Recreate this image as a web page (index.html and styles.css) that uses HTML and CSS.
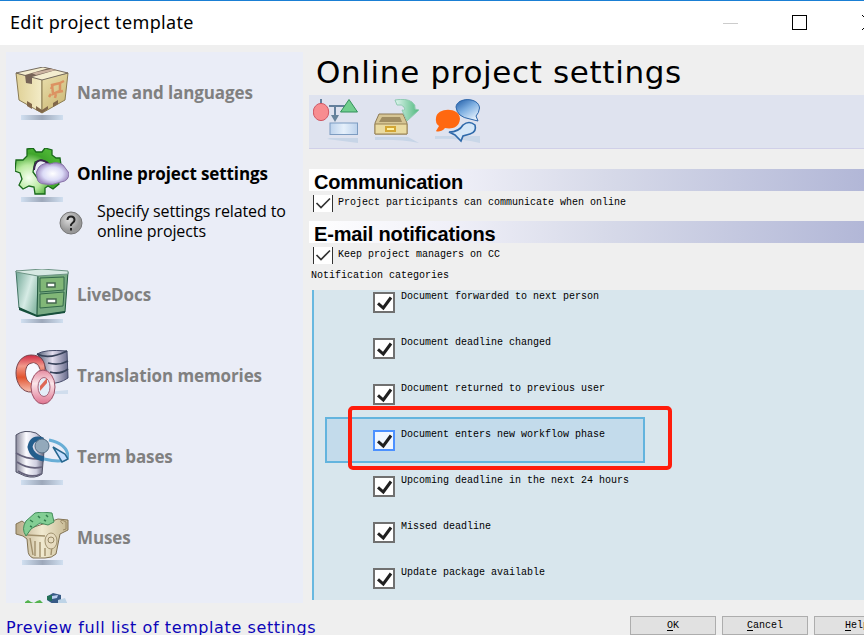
FILE: index.html
```html
<!DOCTYPE html>
<html lang="en">
<head>
<meta charset="utf-8">
<title>Edit project template</title>
<link rel="stylesheet" href="styles.css">
</head>
<body>
<svg width="0" height="0" class="defs">
  <defs>
    <linearGradient id="shadow"><stop offset="0" stop-color="#d0dff0"/><stop offset=".5" stop-color="#9da8ba"/><stop offset="1" stop-color="#d0dff0"/></linearGradient>
    <linearGradient id="boxL"><stop offset="0" stop-color="#e0d196"/><stop offset="1" stop-color="#f3ecc8"/></linearGradient>
    <linearGradient id="boxR" x2=".6" y2="1"><stop offset="0" stop-color="#e9dfae"/><stop offset="1" stop-color="#cdb977"/></linearGradient>
    <radialGradient id="gear" cx=".3" cy=".65" r=".7"><stop offset="0" stop-color="#f6fff0"/><stop offset=".4" stop-color="#b9eaa0"/><stop offset=".75" stop-color="#3fa52b"/><stop offset="1" stop-color="#4cb534"/></radialGradient>
    <radialGradient id="cloud"><stop offset="0" stop-color="#fff"/><stop offset=".6" stop-color="#dcdcf7"/><stop offset="1" stop-color="#a391c6"/></radialGradient>
    <linearGradient id="cab" x2="1" y2=".6"><stop offset="0" stop-color="#6fa694"/><stop offset=".6" stop-color="#d6ebe5"/><stop offset="1" stop-color="#8fbdab"/></linearGradient>
    <linearGradient id="metal"><stop offset="0" stop-color="#8b8b9d"/><stop offset=".35" stop-color="#fbfbff"/><stop offset=".7" stop-color="#cfcfe0"/><stop offset="1" stop-color="#55566e"/></linearGradient>
    <linearGradient id="steel"><stop offset="0" stop-color="#4c5a72"/><stop offset=".5" stop-color="#e5dff0"/><stop offset="1" stop-color="#666a8a"/></linearGradient>
    <linearGradient id="ringA" x2="0" y2="1"><stop offset="0" stop-color="#cf2a44"/><stop offset=".3" stop-color="#f29a8c"/><stop offset=".6" stop-color="#e2542f"/><stop offset="1" stop-color="#f6c2b4"/></linearGradient>
    <linearGradient id="ringB" x2="0" y2="1"><stop offset="0" stop-color="#e58ba0"/><stop offset=".4" stop-color="#fbe6ea"/><stop offset="1" stop-color="#df7490"/></linearGradient>
    <linearGradient id="stone"><stop offset="0" stop-color="#b9a988"/><stop offset=".5" stop-color="#f1ead0"/><stop offset="1" stop-color="#c6b892"/></linearGradient>
    <linearGradient id="blue" x2=".7" y2="1"><stop offset="0" stop-color="#1d5aa5"/><stop offset=".5" stop-color="#7fb0e2"/><stop offset="1" stop-color="#e6f1fc"/></linearGradient>
    <linearGradient id="arrow"><stop offset="0" stop-color="#dff5ef"/><stop offset="1" stop-color="#4fb97d"/></linearGradient>
    <radialGradient id="help" cx=".4" cy=".35"><stop offset="0" stop-color="#dcdcdc"/><stop offset="1" stop-color="#989898"/></radialGradient>
    <linearGradient id="pane"><stop offset="0" stop-color="#bcd2ec"/><stop offset=".5" stop-color="#e6f0fb"/><stop offset="1" stop-color="#bcd2ec"/></linearGradient>
    <symbol id="check" viewBox="0 0 18 17"><path d="M3 9.3 8.300 14 16 3.500" fill="none" stroke="#202020" stroke-width="3"/></symbol>
    <symbol id="thin" viewBox="0 0 18 17"><path d="M2.500 8 7 12.500 16 3.500" fill="none" stroke="#333" stroke-width="1.700"/></symbol>
  </defs>
</svg>

<header class="titlebar">
  <span class="title">Edit project template</span>
  <i class="minimize"></i><i class="maximize"></i>
  <svg class="close" width="15" height="15"><path d="M0 0 15 15M15 0 0 15" stroke="#000"/></svg>
</header>

<div class="body">
  <nav class="sidebar">
    <div class="item">
      <svg class="icon" viewBox="0 0 54 55">
        <rect x="6" y="48" width="42" height="5" fill="url(#shadow)"/>
        <path d="M1 6 27 12V46L4 33Z" fill="url(#boxL)" stroke="#8b7c53"/>
        <path d="M27 12 53 6 50 33 27 46Z" fill="url(#boxR)" stroke="#8b7c53"/>
        <path d="M1 6 28 0 53 6 27 13Z" fill="#f4edcf" stroke="#756b5f"/>
        <path d="M10 8 34 1 41 3 17 10V17L11 16Z" fill="#776457"/><path d="M17 6 36 2 41 3 21 8Z" fill="#cbb3a0"/>
        <path d="M12 34 17 37V42L12 39ZM38 36 43 33V37L38 40ZM21 39 27 43 33 39V42L27 46 21 43Z" fill="#81674a"/>
        <path d="M37 18 45 16V24L38 27ZM45 16 49 14M36 27 34 30M38 18 36 22M43 25 48 24M41 27 40 31" fill="none" stroke="#dc9262" stroke-width="2.5"/>
      </svg>
      <span>Name and languages</span>
    </div>

    <div class="item active">
      <svg class="icon" viewBox="0 0 54 55">
        <rect x="6" y="49" width="42" height="5" fill="url(#shadow)"/>
        <path fill-rule="evenodd" d="M12 1 18 0 21 4H27L30 0 37 2 37 7 41 10 45 10 46 17 43 22 42 31 44 36 38 41 33 38 30 40V46H20L19 39 14 38 8 41 4 37 7 31 5 25 0 23 1 12 8 12 12 8ZM20 14 18 24 23 31 31 30 36 23 32 14 26 12Z" fill="url(#gear)" stroke="#19691b" stroke-width="1.3"/>
        <path d="M19 22C20 11 26 10 34 16" fill="none" stroke="#3c2550" stroke-width="2"/>
        <path d="M24 19Q29 14 35 16 42 13 48 17L54 25Q54 33 46 34 37 38 30 36 22 36 22 29 20 24 24 19Z" fill="url(#cloud)" stroke="#8873a9"/>
      </svg>
      <span>Online project settings</span>
    </div>
    <div class="description">
      <svg width="24" height="24" viewBox="0 0 24 24"><circle cx="12" cy="12" r="11" fill="url(#help)" stroke="#777"/><path d="M8.5 9Q8.5 5.5 12 5.5T15.5 9Q15.5 10.5 13.5 12T12 15M12 17V19.5" fill="none" stroke="#222" stroke-width="2"/></svg>
      <p>Specify settings related to<br>online projects</p>
    </div>

    <div class="item">
      <svg class="icon" viewBox="0 0 54 55">
        <rect x="6" y="50" width="42" height="4" fill="url(#shadow)"/>
        <path d="M1 2 23 5 22 47 4 39Z" fill="url(#cab)" stroke="#447565"/>
        <path d="M23 5 53 3 50 43 22 47Z" fill="#77aa82" stroke="#235940"/>
        <path d="M1 2 27 0 53 2V5L23 7 1 3Z" fill="#d7e9e3" stroke="#6d9485"/>
        <path d="M25 9 49 8 49 21 25 23ZM25 25 49 23 48 37 25 39Z" fill="#81b777" stroke="#33694a"/>
        <path d="M32 14H40V18H32ZM32 30H41V34H32Z" fill="#fff" stroke="#46684f" stroke-width="1.5"/>
        <path d="M4 38 22 46 50 42V44L22 48 4 41Z" fill="#174f3b"/>
      </svg>
      <span>LiveDocs</span>
    </div>

    <div class="item">
      <svg class="icon" viewBox="0 0 54 55">
        <path d="M34 42 53 40V44H35Z" fill="#d0dded"/>
        <path d="M22 4Q30-1 52 1L53 28Q44 34 36 33L27 9Z" fill="url(#steel)" stroke="#454b69"/>
        <path d="M22 4Q34 10 52 1M33 13Q44 16 53 11M35 22Q45 25 53 19" fill="none" stroke="#39435b" stroke-width="1.8"/>
        <path fill-rule="evenodd" d="M16 5C26 5 31 11 30 22L17 42C7 43 1 33 1 23S7 5 16 5ZM18 13C12 13 10 18 11 25S15 35 20 28L25 20C24 15 22 13 18 13Z" fill="url(#ringA)" stroke="#79444b"/>
        <path d="M11 22Q12 14 19 13L25 20 16 29 16 33Q11 31 11 22Z" fill="#f7f9ff"/>
        <ellipse cx="28" cy="37" rx="12" ry="17" fill="url(#ringB)" stroke="#9b5267"/>
        <ellipse cx="29" cy="37" rx="6" ry="9.5" fill="#e4edf8" stroke="#a6647a"/>
        <path d="M25 36 32 28V33L25 41Z" fill="#de6855"/>
      </svg>
      <span>Translation memories</span>
    </div>

    <div class="item">
      <svg class="icon" viewBox="0 0 54 55">
        <rect x="6" y="49" width="42" height="5" fill="url(#shadow)"/>
        <path d="M1 4Q9-2 21 2L30 9 27 43Q20 48 10 45L1 41Z" fill="url(#metal)" stroke="#515367"/>
        <path d="M1 22Q12 29 28 28M2 31Q14 39 27 36M3 40Q15 48 26 43" fill="none" stroke="#65627b" stroke-width="1.7"/>
        <path d="M34 9Q52 13 53 25 51 33 29 28" fill="none" stroke="#68aed6" stroke-width="3"/>
        <path d="M28 9Q17 5 15 16 17 26 29 28" fill="none" stroke="#245e8c" stroke-width="5"/>
        <circle cx="27" cy="15" r="7" fill="#93a9bb" stroke="#536d83"/>
        <path d="M38 16 50 23 53 28 47 31Z" fill="#c6dfff" stroke="#27678f" stroke-width="1.5"/>
      </svg>
      <span>Term bases</span>
    </div>

    <div class="item">
      <svg class="icon" viewBox="0 0 54 55">
        <rect x="7" y="48" width="41" height="5" fill="url(#shadow)"/>
        <path d="M1 12 7 9 16 16 43 7 53 8 53 18 45 22 41 42Q37 46 30 46H18Q13 44 13 38L12 27 8 24 1 22Z" fill="url(#stone)" stroke="#827354"/>
        <path d="M12 23 30 24M15 26 18 43M20 29V44M25 30V45M30 36V44M37 34 36 43" fill="none" stroke="#a1906c" stroke-width="1.4"/>
        <ellipse cx="36" cy="29" rx="6" ry="8" fill="#e7dcc0" stroke="#a19370"/><circle cx="36" cy="28" r="3" fill="none" stroke="#968865"/>
        <path d="M20 1 27 0 37 1 39 10 33 13 25 11 16 17 11 24Q6 17 11 9Z" fill="#83ce94" stroke="#438c5b"/>
        <path d="M15 8 18 10M23 4 25 6M31 3 33 5M29 8 31 9M15 14 17 15" stroke="#317d4d" stroke-width="1.5"/>
        <path d="M48 12Q44 9 47 8L51 10V17L48 18" fill="none" stroke="#9a8966"/>
      </svg>
      <span>Muses</span>
    </div>

    <div class="item">
      <svg class="icon" viewBox="0 0 54 55">
        <path d="M10 9 13 7 16 9 19 10 22 8 25 7 28 10V12H10Z" fill="#52b24c"/>
        <path d="M33 3 38 0 46 2V8L52 10V30H38V11L32 7Z" fill="#385b86"/><path d="M37 3 43 2 42 5 37 6Z" fill="#b9cdf0"/><path d="M43 7 50 5 53 12H43Z" fill="#bed4e7"/><path d="M32 3 37 2V8L32 7Z" fill="#237057"/>
      </svg>
      <span></span>
    </div>
  </nav>

  <main class="main">
    <h1>Online project settings</h1>
    <div class="toolbar">
      <svg width="46" height="44" viewBox="0 0 46 44">
        <path d="M17 39H45V44Q30 42 14 40Z" fill="#c7d5e7"/>
        <path d="M8 0V8M16 7H38M22 7V19" fill="none" stroke="#64809c" stroke-width="2"/><path d="M18 16H26L22 23Z" fill="#67839b"/>
        <ellipse cx="8" cy="13" rx="7.7" ry="8.6" fill="#f78d90" stroke="#cf5864"/>
        <path d="M36 .5 44.5 13H27.5Z" fill="#71ce8e" stroke="#32915a"/>
        <rect x="17" y="24" width="27.5" height="11.5" fill="url(#pane)" stroke="#7d9cc1"/>
      </svg>
      <svg width="46" height="44" viewBox="0 0 46 44">
        <path d="M1 38H34L45 44Q25 40 1 41Z" fill="#c7d5e7"/>
        <path d="M5 15H29L33 24V35H1V24Z" fill="#d6c594" stroke="#8d7b55"/><path d="M8 18H26L28 23H5Z" fill="#a08d62"/>
        <path d="M1 25H33V35H1Z" fill="#eadba2" stroke="#998354"/><rect x="12" y="28" width="9" height="4" fill="#fff1a1" stroke="#d3a634" stroke-width="2"/>
        <path d="M21 1Q32-1 38 3 42 6 41 10L45 11 33 22 28 11Q32 12 30 8 28 5 23 6Z" fill="url(#arrow)" stroke="#8fcab0"/>
      </svg>
      <svg width="46" height="44" viewBox="0 0 46 44">
        <path d="M0 37H45V44Q22 39 0 40Z" fill="#c9d7e8"/>
        <path d="M21 8C22-2 44-2 44.500 9Q44 14 41 17L43 22 35 20Q22 18 21 8Z" fill="url(#blue)" stroke="#2c65a9"/>
        <path d="M28 26Q34 21 40 26 42 33 35 35L28 37 26 42 20 36 14 33Q24 33 28 26Z" fill="#d5e7f8" stroke="#2e69aa" stroke-width="1.6"/>
        <path d="M1 19C2 8 25 8 25 20 24 30 15 30 10 29 7 33 2 33 1 32L4 27Q0 24 1 19Z" fill="#ff6810"/>
      </svg>
    </div>

    <h2>Communication</h2>
    <div class="option"><i class="tick"><svg><use href="#thin"/></svg></i><span>Project participants can communicate when online</span></div>
    <h2>E-mail notifications</h2>
    <div class="option"><i class="tick"><svg><use href="#thin"/></svg></i><span>Keep project managers on CC</span></div>
    <div class="caption">Notification categories</div>

    <div class="list">
      <div class="row"><i class="box"><svg><use href="#check"/></svg></i><span>Document forwarded to next person</span></div>
      <div class="row"><i class="box"><svg><use href="#check"/></svg></i><span>Document deadline changed</span></div>
      <div class="row"><i class="box"><svg><use href="#check"/></svg></i><span>Document returned to previous user</span></div>
      <div class="row selected"><i class="box"><svg><use href="#check"/></svg></i><span>Document enters new workflow phase</span><b class="marker"></b></div>
      <div class="row"><i class="box"><svg><use href="#check"/></svg></i><span>Upcoming deadline in the next 24 hours</span></div>
      <div class="row"><i class="box"><svg><use href="#check"/></svg></i><span>Missed deadline</span></div>
      <div class="row"><i class="box"><svg><use href="#check"/></svg></i><span>Update package available</span></div>
    </div>
  </main>
</div>

<footer class="footer">
  <a class="preview">Preview full list of template settings</a>
  <div class="buttons"><button><u>O</u>K</button><button><u>C</u>ancel</button><button><u>H</u>elp</button></div>
</footer>
</body>
</html>
```
FILE: styles.css
```css
* { box-sizing: border-box; }
body {
  margin: 0;
  width: 864px;
  height: 635px;
  overflow: hidden;
  background: #efefef;
  color: #000;
  font: 10px/12px "Liberation Mono", monospace;
}
svg { display: block; flex: none; }
.defs { position: absolute; }

.titlebar {
  display: flex;
  align-items: center;
  height: 45px;
  padding-left: 10px;
  background: #fff;
  border-top: 1px solid #1a7fd4;
}
.title { flex: none; width: 713px; padding-bottom: 2px; font: 18px/24px "Noto Sans", sans-serif; letter-spacing: .35px; white-space: nowrap; }
.minimize { width: 15px; height: 1px; background: #ccc; flex: none; }
.maximize { width: 15px; height: 15px; margin: -1px 0 0 54px; border: 1px solid #000; flex: none; }
.close { margin: -1px 0 0 55px; }

.body { display: flex; height: 558px; padding: 7px 0 0 6px; }
.sidebar { flex: none; width: 297px; height: 551px; overflow: hidden; background: #eaedf7; }
.item {
  display: flex;
  height: 81px;
  padding: 15px 0 0 9px;
  color: #808080;
  font: bold 17px/24px "Open Sans", sans-serif;
  letter-spacing: -.1px;
  white-space: nowrap;
}
.item span { margin: 14px 0 0 8px; }
.icon { width: 54px; height: 55px; }
.active { height: 67px; color: #000; }
.description { display: flex; height: 54px; padding: 11px 0 0 53px; }
.description p { margin: -10px 0 0 14px; font: 16px/20px "Open Sans", sans-serif; letter-spacing: -.1px; white-space: nowrap; }

.main { flex: none; width: 555px; margin-left: 6px; }
h1 { margin: 0; height: 43px; padding-left: 7px; font: 31px/40px "DejaVu Sans", sans-serif; letter-spacing: .65px; }
.toolbar {
  display: flex;
  gap: 15px;
  height: 54px;
  padding: 4px 0 0 4px;
  background: #dfe3ef;
  border-bottom: 1px solid #d0d0e8;
}
h2 {
  height: 22px;
  margin: 20px 0 0;
  padding-left: 5px;
  background: linear-gradient(90deg, #fff 0%, #f0f0f8 25%, #d7dae9 53%, #b2b7d7 100%);
  font: bold 20px/26px "Liberation Sans", sans-serif;
  letter-spacing: -.15px;
}
.option { display: flex; height: 26px; padding: 4px 0 0 4px; }
.option + h2 { margin-top: 4px; }
.option span { margin: 2px 0 0 5px; }
.tick { width: 20px; height: 17px; background: #fff; border: solid #333; border-width: 0 1px; flex: none; }
.tick svg, .box svg { width: 18px; height: 17px; }
.caption { height: 21px; padding: 1px 0 0 2px; }

.list { height: 310px; margin-left: 3px; overflow: hidden; background: #d8e6ed; border-left: 2px solid #68b8e0; }
.row {
  position: relative;
  display: flex;
  width: 320px;
  height: 46px;
  margin-left: 11px;
  padding: 13px 0 0 48px;
}
.row:first-child { margin-top: -11px; }
.row span { margin: -1px 0 0 6px; white-space: nowrap; }
.selected { padding: 11px 0 0 46px; background: #c3dbeb; border: 2px solid #63b4de; }
.box { flex: none; width: 22px; height: 21px; background: #fff; border: 2px solid #707070; }
.selected .box { background: #f1f7ff; border-color: #4c91ff; }
.marker {
  position: absolute;
  z-index: 1;
  left: 21px;
  top: -13px;
  width: 324px;
  height: 64px;
  border: 4px solid #ff1d0c;
  border-radius: 5px;
}

.footer { display: flex; height: 32px; }
.preview { flex: none; width: 630px; padding: 15px 0 0 6px; color: #0c05b8; font: 16px/20px "DejaVu Sans", sans-serif; letter-spacing: .6px; white-space: nowrap; }
.buttons { display: flex; gap: 6px; padding-top: 13px; }
button {
  flex: none;
  width: 86px;
  height: 19px;
  padding: 0;
  background: #e1e1e1;
  border: 1px solid #adadad;
  font: 10px/16px "Liberation Mono", monospace;
  color: #000;
}
u { text-underline-offset: 2px; }
```
